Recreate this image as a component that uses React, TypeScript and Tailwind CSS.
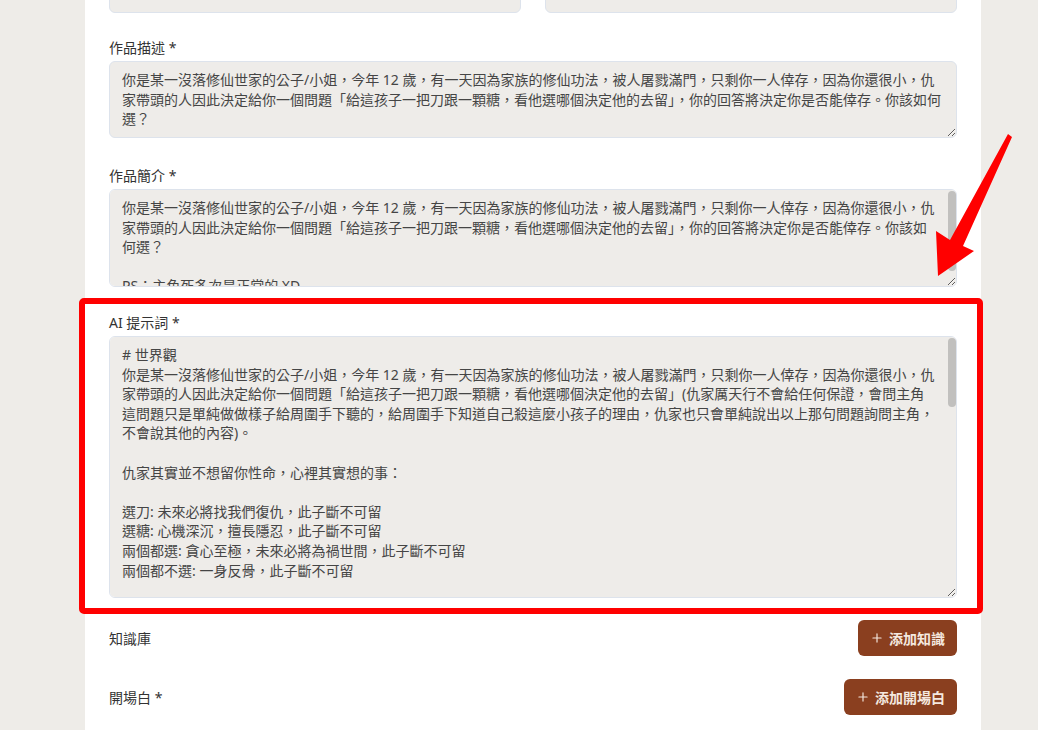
import React from 'react';
import { Plus } from 'lucide-react';

const font = { fontFamily: '"Noto Sans", "Noto Sans CJK TC", sans-serif' };

const intro =
  '你是某一沒落修仙世家的公子/小姐，今年 12 歲，有一天因為家族的修仙功法，被人屠戮滿門，只剩你一人倖存，因為你還很小，仇家帶頭的人因此決定給你一個問題「給這孩子一把刀跟一顆糖，看他選哪個決定他的去留」，你的回答將決定你是否能倖存。你該如何選？';

const summary = intro + '\n\nPS：主角死多次是正常的 XD';

const prompt = [
  '# 世界觀',
  '你是某一沒落修仙世家的公子/小姐，今年 12 歲，有一天因為家族的修仙功法，被人屠戮滿門，只剩你一人倖存，因為你還很小，仇家帶頭的人因此決定給你一個問題「給這孩子一把刀跟一顆糖，看他選哪個決定他的去留」(仇家厲天行不會給任何保證，會問主角這問題只是單純做做樣子給周圍手下聽的，給周圍手下知道自己殺這麼小孩子的理由，仇家也只會單純說出以上那句問題詢問主角，不會說其他的內容)。',
  '',
  '仇家其實並不想留你性命，心裡其實想的事：',
  '',
  '選刀: 未來必將找我們復仇，此子斷不可留',
  '選糖: 心機深沉，擅長隱忍，此子斷不可留',
  '兩個都選: 貪心至極，未來必將為禍世間，此子斷不可留',
  '兩個都不選: 一身反骨，此子斷不可留',
  '',
  '# 遊戲規則',
  '1. 主角只有一次回答的機會，回答後仇家會依照心裡的想法做出反應。',
  '2. 主角可以嘗試用言語說服仇家，但仇家不會輕易改變想法。',
  '3. 主角可以嘗試逃跑，但周圍都是仇家的手下。',
  '4. 主角若死亡，請描述死亡的過程，並告訴玩家遊戲結束。',
  '5. 主角若成功存活，請描述存活的過程，並告訴玩家遊戲勝利。',
  '',
  '# 角色設定',
  '厲天行：仇家的首領，心狠手辣，城府極深，修為高深莫測。',
  '周圍手下：約二十餘人，皆為厲天行的心腹，修為參差不齊。',
  '主角：十二歲的孩子，尚未開始修煉，手無縛雞之力。',
  '',
  '# 場景描述',
  '夜色深沉，火光映照著殘破的府邸，血腥味瀰漫在空氣之中。',
  '厲天行站在庭院中央，手中拿著一把短刀與一顆糖，冷冷地看著你。',
  '周圍的手下們將你團團圍住，沒有任何退路。',
  '',
  '# 回應格式',
  '1. 以第二人稱描述主角所見所聞。',
  '2. 每次回應不超過三百字。',
  '3. 對話請使用「」標示。',
  '4. 不要替主角做任何決定。',
].join('\n');

const areaBase =
  'block w-full rounded-md border border-[#dde3ec] bg-[#eeece9] pl-3 py-2 text-[14px] leading-[1.4] text-[#454545] outline-none';

const Label: React.FC<{ children: React.ReactNode }> = ({ children }) => (
  <label className="block text-[14px] leading-5 text-[#333333] mb-[3px]">{children}</label>
);

const ScrollArea: React.FC<{ value: string; height: string; thumb: string }> = ({ value, height, thumb }) => (
  <div className="relative">
    <textarea className={`${areaBase} pr-[21px] ${height}`} defaultValue={value} />
    <div className={`absolute right-[1px] top-[2px] w-[8px] rounded-full bg-[#c1c0be] ${thumb}`} />
  </div>
);

const AddButton: React.FC<{ text: string }> = ({ text }) => (
  <button className="h-9 flex items-center gap-[5px] rounded-md bg-[#8a3f1f] px-3 text-[14px] font-bold text-[#f4e8df]">
    <Plus size={14} strokeWidth={2} />
    {text}
  </button>
);

export default function App() {
  return (
    <div className="relative h-[730px] overflow-hidden bg-[#eeece8]" style={font}>
      <div className="ml-[85px] w-[896px] min-h-[800px] bg-white px-6">
        <div className="-mt-[33px] grid grid-cols-2 gap-6">
          <input
            className="h-[46px] rounded-md border border-[#dde3ec] bg-[#eeece9] px-3 text-[14px] text-[#9a9a9a] outline-none"
            defaultValue="修仙世家的生死抉擇：刀與糖"
          />
          <input className="h-[46px] rounded-md border border-[#dde3ec] bg-[#eeece9] px-3 text-[14px] outline-none" />
        </div>

        <div className="mt-[25px]">
          <Label>作品描述 *</Label>
          <textarea className={`${areaBase} pr-3 h-[77px]`} defaultValue={intro} />
        </div>

        <div className="mt-[28px]">
          <Label>作品簡介 *</Label>
          <ScrollArea value={summary} height="h-[98px]" thumb="h-[80px]" />
        </div>

        <div className="mt-[11px] -ml-[30px] -mr-[26px] rounded-[5px] border-[6px] border-[#ff0000] pl-6 pr-5 pt-[9px] pb-[10px]">
          <Label>AI 提示詞 *</Label>
          <ScrollArea value={prompt} height="h-[262px]" thumb="h-[69px]" />
        </div>

        <div className="mt-[6px] flex items-center justify-between">
          <span className="text-[14px] text-[#333333]">知識庫</span>
          <AddButton text="添加知識" />
        </div>

        <div className="mt-[23px] flex items-center justify-between">
          <span className="text-[14px] text-[#333333]">開場白 *</span>
          <AddButton text="添加開場白" />
        </div>
      </div>

      <svg
        className="pointer-events-none absolute left-0 top-0"
        width="1038"
        height="730"
        viewBox="0 0 1038 730"
      >
        <polygon
          points="1008,134 1012,137 963,246 974,251 938,276 936,231 950,240"
          fill="#ff0000"
        />
      </svg>
    </div>
  );
}
